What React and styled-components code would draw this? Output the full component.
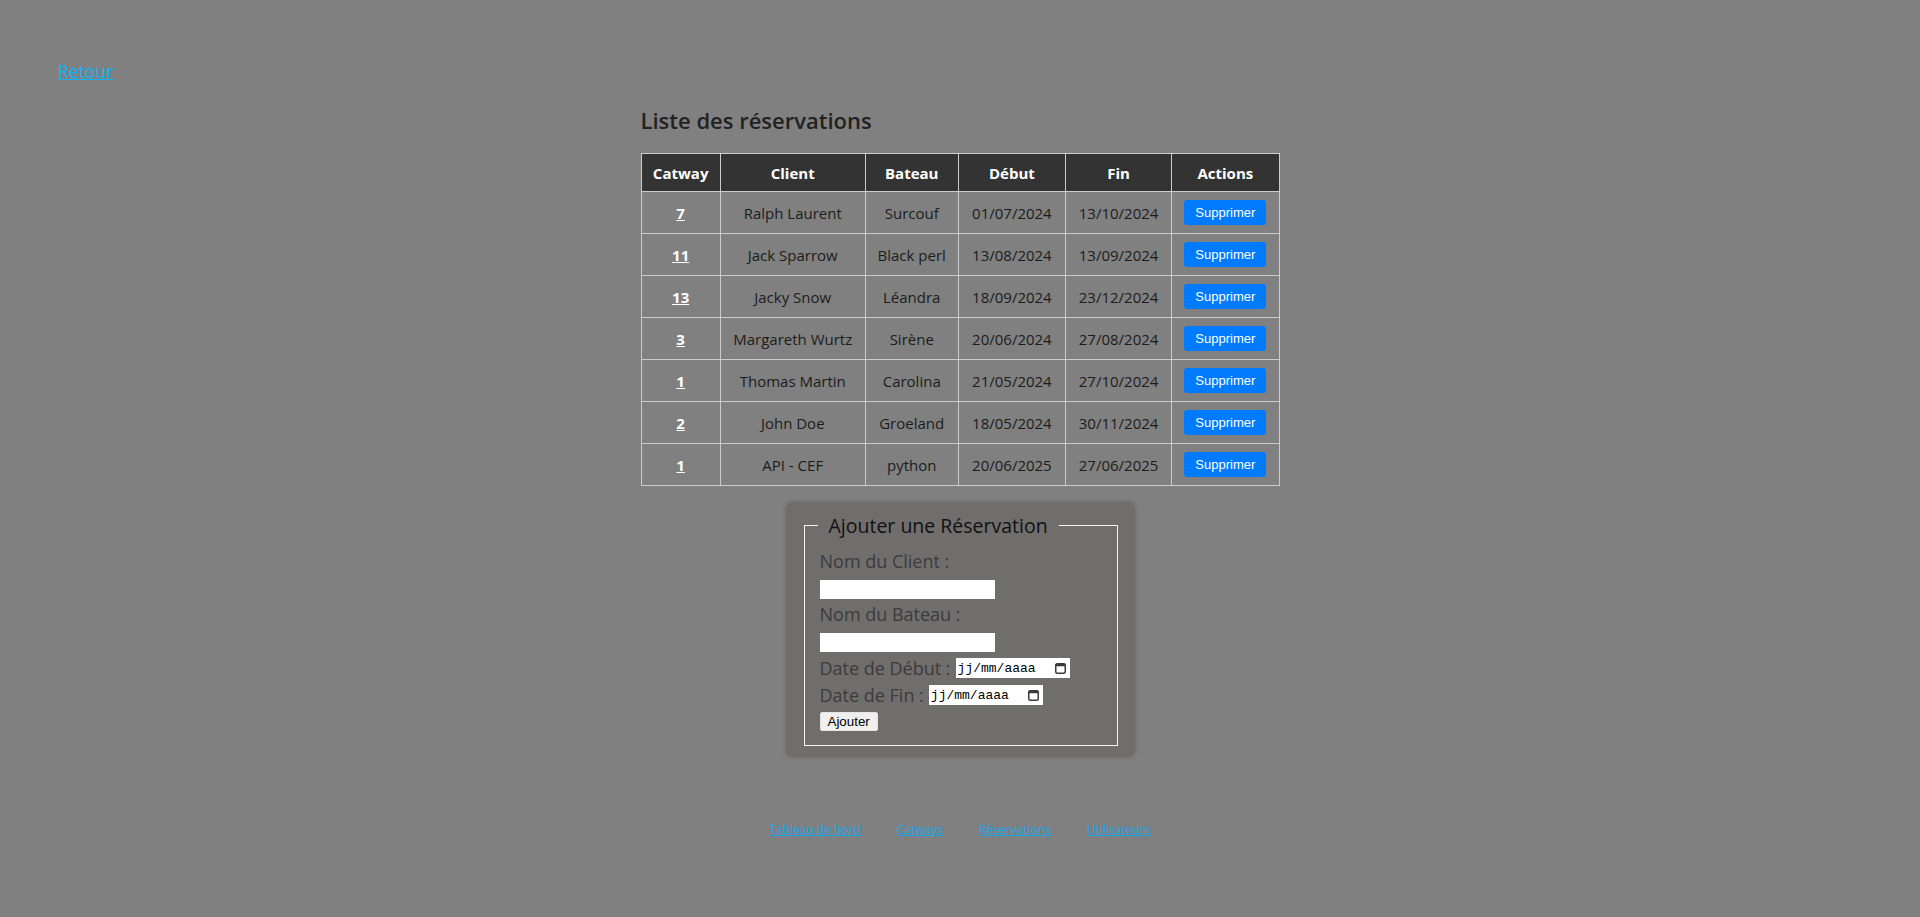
import React from "react";
import styled, { createGlobalStyle } from "styled-components";

const GlobalStyle = createGlobalStyle`
  body {
    margin: 0;
    background-color: #808080;
    font-family: "Open Sans", "Noto Sans", sans-serif;
    color: #1c1c1c;
  }
`;

const Page = styled.div`
  min-height: 917px;
  display: flex;
  flex-direction: column;
`;

const TopBar = styled.div`
  padding: 59px 0 0 58px;
`;

const BackLink = styled.a`
  color: #0db4f7;
  font-size: 17.5px;
  text-decoration: underline;
`;

const Main = styled.main`
  display: flex;
  flex-direction: column;
  align-items: center;
  padding-top: 22px;
`;

const Section = styled.section`
  width: 639px;
`;

const Title = styled.h2`
  margin: 0 0 18px;
  font-size: 22px;
  font-weight: 600;
  color: #222;
`;

const Table = styled.table`
  width: 639px;
  border-collapse: collapse;
  font-size: 15px;
`;

const Th = styled.th`
  background-color: #333;
  color: #fff;
  font-weight: 700;
  border: 1px solid #ccc;
  height: 37px;
  padding: 0;
  width: ${(p) => p.w}px;
`;

const Td = styled.td`
  border: 1px solid #ccc;
  height: 41px;
  padding: 0;
  text-align: center;
  color: #1c1c1c;
`;

const CatwayLink = styled.a`
  color: #fff;
  font-weight: 700;
  text-decoration: underline;
`;

const DeleteButton = styled.button`
  background-color: #007bff;
  color: #fff;
  border: none;
  border-radius: 3px;
  font-family: "Liberation Sans", Arial, sans-serif;
  font-size: 13px;
  line-height: 15px;
  padding: 5px 11px;
  cursor: pointer;
`;

const FormCard = styled.div`
  margin-top: 16px;
  width: 349px;
  box-sizing: border-box;
  background-color: #706d6d;
  border-radius: 7px;
  box-shadow: 0 0 5px rgba(0, 0, 0, 0.2);
  padding: 10px 17px 11px 18px;
`;

const Fieldset = styled.fieldset`
  margin: 0;
  border: 1px solid #f4f4f4;
  padding: 0 14px 14px 15px;
  display: flex;
  flex-direction: column;
  align-items: flex-start;
`;

const Legend = styled.legend`
  font-size: 19.5px;
  color: #111;
  padding: 0 11px;
  margin-left: -2px;
`;

const Label = styled.label`
  font-size: 18px;
  line-height: ${(p) => p.lh || 24}px;
  color: #3d3b3b;
  margin-top: ${(p) => p.mt || 0}px;
`;

const TextInput = styled.input`
  width: 175px;
  height: 19px;
  box-sizing: border-box;
  border: none;
  margin: 7px 0 0;
  padding: 0 2px;
  background: #fff;
`;

const DateRow = styled.div`
  display: flex;
  align-items: center;
  gap: 5px;
  margin-top: ${(p) => p.mt}px;
`;

const DateBox = styled.span`
  display: inline-flex;
  align-items: center;
  justify-content: space-between;
  width: 114px;
  height: 20px;
  box-sizing: border-box;
  background: #fff;
  padding: 0 4px 0 2px;
`;

const DateText = styled.input`
  width: 80px;
  border: none;
  padding: 0;
  outline: none;
  font-family: "Liberation Mono", monospace;
  font-size: 13px;
  background: transparent;
  &::placeholder {
    color: #000;
    opacity: 1;
  }
`;

const AddButton = styled.button`
  margin-top: 6px;
  background: #efefef;
  border: 1px solid #e4e4e4;
  border-radius: 2px;
  font-family: "Liberation Sans", Arial, sans-serif;
  font-size: 13.33px;
  color: #000;
  height: 19px;
  padding: 0 7px;
`;

const Footer = styled.footer`
  display: flex;
  justify-content: center;
  gap: 36px;
  margin-top: 64px;
`;

const FooterLink = styled.a`
  color: #16a8ee;
  font-size: 12px;
  text-decoration: underline;
`;

const CalendarIcon = () => (
  <svg width="11" height="12" viewBox="0 0 11 12">
    <rect x="0.75" y="1.75" width="9.5" height="9.5" rx="1.5" fill="none" stroke="#3a3a3a" strokeWidth="1.5" />
    <rect x="0.75" y="1.75" width="9.5" height="2.5" fill="#3a3a3a" />
  </svg>
);

const columns = [
  ["Catway", 79],
  ["Client", 146],
  ["Bateau", 93],
  ["Début", 107],
  ["Fin", 106],
  ["Actions", 107],
];

const reservations = [
  { catway: 7, client: "Ralph Laurent", boat: "Surcouf", start: "01/07/2024", end: "13/10/2024" },
  { catway: 11, client: "Jack Sparrow", boat: "Black perl", start: "13/08/2024", end: "13/09/2024" },
  { catway: 13, client: "Jacky Snow", boat: "Léandra", start: "18/09/2024", end: "23/12/2024" },
  { catway: 3, client: "Margareth Wurtz", boat: "Sirène", start: "20/06/2024", end: "27/08/2024" },
  { catway: 1, client: "Thomas Martin", boat: "Carolina", start: "21/05/2024", end: "27/10/2024" },
  { catway: 2, client: "John Doe", boat: "Groeland", start: "18/05/2024", end: "30/11/2024" },
  { catway: 1, client: "API - CEF", boat: "python", start: "20/06/2025", end: "27/06/2025" },
];

function DateField({ id }) {
  return (
    <DateBox>
      <DateText id={id} type="text" placeholder="jj/mm/aaaa" />
      <CalendarIcon />
    </DateBox>
  );
}

export default function App() {
  return (
    <Page>
      <GlobalStyle />
      <TopBar>
        <BackLink href="#">Retour</BackLink>
      </TopBar>

      <Main>
        <Section>
          <Title>Liste des réservations</Title>
          <Table>
            <thead>
              <tr>
                {columns.map(([name, w]) => (
                  <Th key={name} w={w}>
                    {name}
                  </Th>
                ))}
              </tr>
            </thead>
            <tbody>
              {reservations.map((r, i) => (
                <tr key={i}>
                  <Td>
                    <CatwayLink href="#">{r.catway}</CatwayLink>
                  </Td>
                  <Td>{r.client}</Td>
                  <Td>{r.boat}</Td>
                  <Td>{r.start}</Td>
                  <Td>{r.end}</Td>
                  <Td>
                    <DeleteButton>Supprimer</DeleteButton>
                  </Td>
                </tr>
              ))}
            </tbody>
          </Table>
        </Section>

        <FormCard>
          <Fieldset>
            <Legend>Ajouter une Réservation</Legend>
            <Label htmlFor="client" mt={10}>
              Nom du Client :
            </Label>
            <TextInput id="client" type="text" />
            <Label htmlFor="boat" mt={3}>
              Nom du Bateau :
            </Label>
            <TextInput id="boat" type="text" />
            <DateRow mt={5}>
              <Label htmlFor="start" lh={22}>
                Date de Début :
              </Label>
              <DateField id="start" />
            </DateRow>
            <DateRow mt={5}>
              <Label htmlFor="end" lh={22}>
                Date de Fin :
              </Label>
              <DateField id="end" />
            </DateRow>
            <AddButton>Ajouter</AddButton>
          </Fieldset>
        </FormCard>

        <Footer>
          <FooterLink href="#">Tableau de bord</FooterLink>
          <FooterLink href="#">Catways</FooterLink>
          <FooterLink href="#">Réservations</FooterLink>
          <FooterLink href="#">Utilisateurs</FooterLink>
        </Footer>
      </Main>
    </Page>
  );
}
